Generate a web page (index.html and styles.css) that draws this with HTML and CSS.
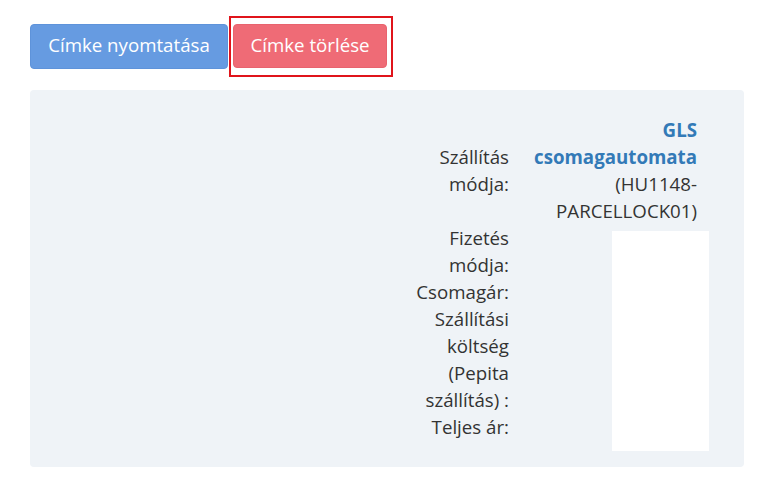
FILE: index.html
```html
<!DOCTYPE html>
<html lang="hu">
<head>
  <meta charset="UTF-8" />
  <meta name="viewport" content="width=device-width, initial-scale=1.0"/>
  <title>Címke</title>
  <link rel="stylesheet" href="styles.css">
</head>
<body>
  <div class="actions">
    <button class="btn btn-print">Címke nyomtatása</button>
    <span class="highlight">
      <button class="btn btn-delete">Címke törlése</button>
    </span>
  </div>

  <div class="panel">
    <table class="summary">
      <tr>
        <td class="label">Szállítás módja:</td>
        <td class="value"><strong class="carrier">GLS csomagautomata</strong> (HU1148-PARCELLOCK01)</td>
      </tr>
      <tr>
        <td class="label">Fizetés módja:</td>
        <td class="value blank-cell" rowspan="4"><div class="blank"></div></td>
      </tr>
      <tr>
        <td class="label">Csomagár:</td>
      </tr>
      <tr>
        <td class="label">Szállítási költség (Pepita szállítás) :</td>
      </tr>
      <tr>
        <td class="label">Teljes ár:</td>
      </tr>
    </table>
  </div>
</body>
</html>
```

FILE: styles.css
```css
body {
  margin: 0;
  padding: 16px 13px 0 30px;
  font-family: "Open Sans", Arial, sans-serif;
  font-size: 18.7px;
  line-height: 27px;
  color: #333;
  background: #fff;
}
.actions {
  display: flex;
  align-items: center;
  gap: 1px;
}
.btn {
  font-family: inherit;
  font-size: 18.7px;
  line-height: 27px;
  color: #fff;
  padding: 6px 0 10px;
  white-space: nowrap;
  text-align: center;
  border-radius: 4px;
  border: 1px solid transparent;
  cursor: pointer;
}
.btn-print {
  background: #669be1;
  border-color: #5e93da;
  width: 198px;
  height: 45px;
}
.btn-delete {
  background: #ef6b76;
  border-color: #e8636e;
  width: 154px;
  height: 44px;
}
.highlight {
  display: inline-flex;
  border: 2px solid #e0141b;
  padding: 6px 4px 7px 2px;
}
.panel {
  margin-top: 13px;
  width: 714px;
  box-sizing: border-box;
  background: #eff3f7;
  border-radius: 4px;
  padding: 26px 35px 27px;
  display: flex;
  justify-content: flex-end;
}
.summary {
  border-collapse: collapse;
}
.summary td {
  padding: 0 12px;
  text-align: right;
  vertical-align: middle;
}
.summary .label {
  width: 96px;
}
.summary .value {
  width: 164px;
}
.carrier {
  color: #337ab7;
}
.summary .blank-cell {
  padding: 0;
  vertical-align: top;
}
.blank {
  width: 97px;
  height: 220px;
  margin: 7px 0 -11px auto;
  background: #fff;
}
```
